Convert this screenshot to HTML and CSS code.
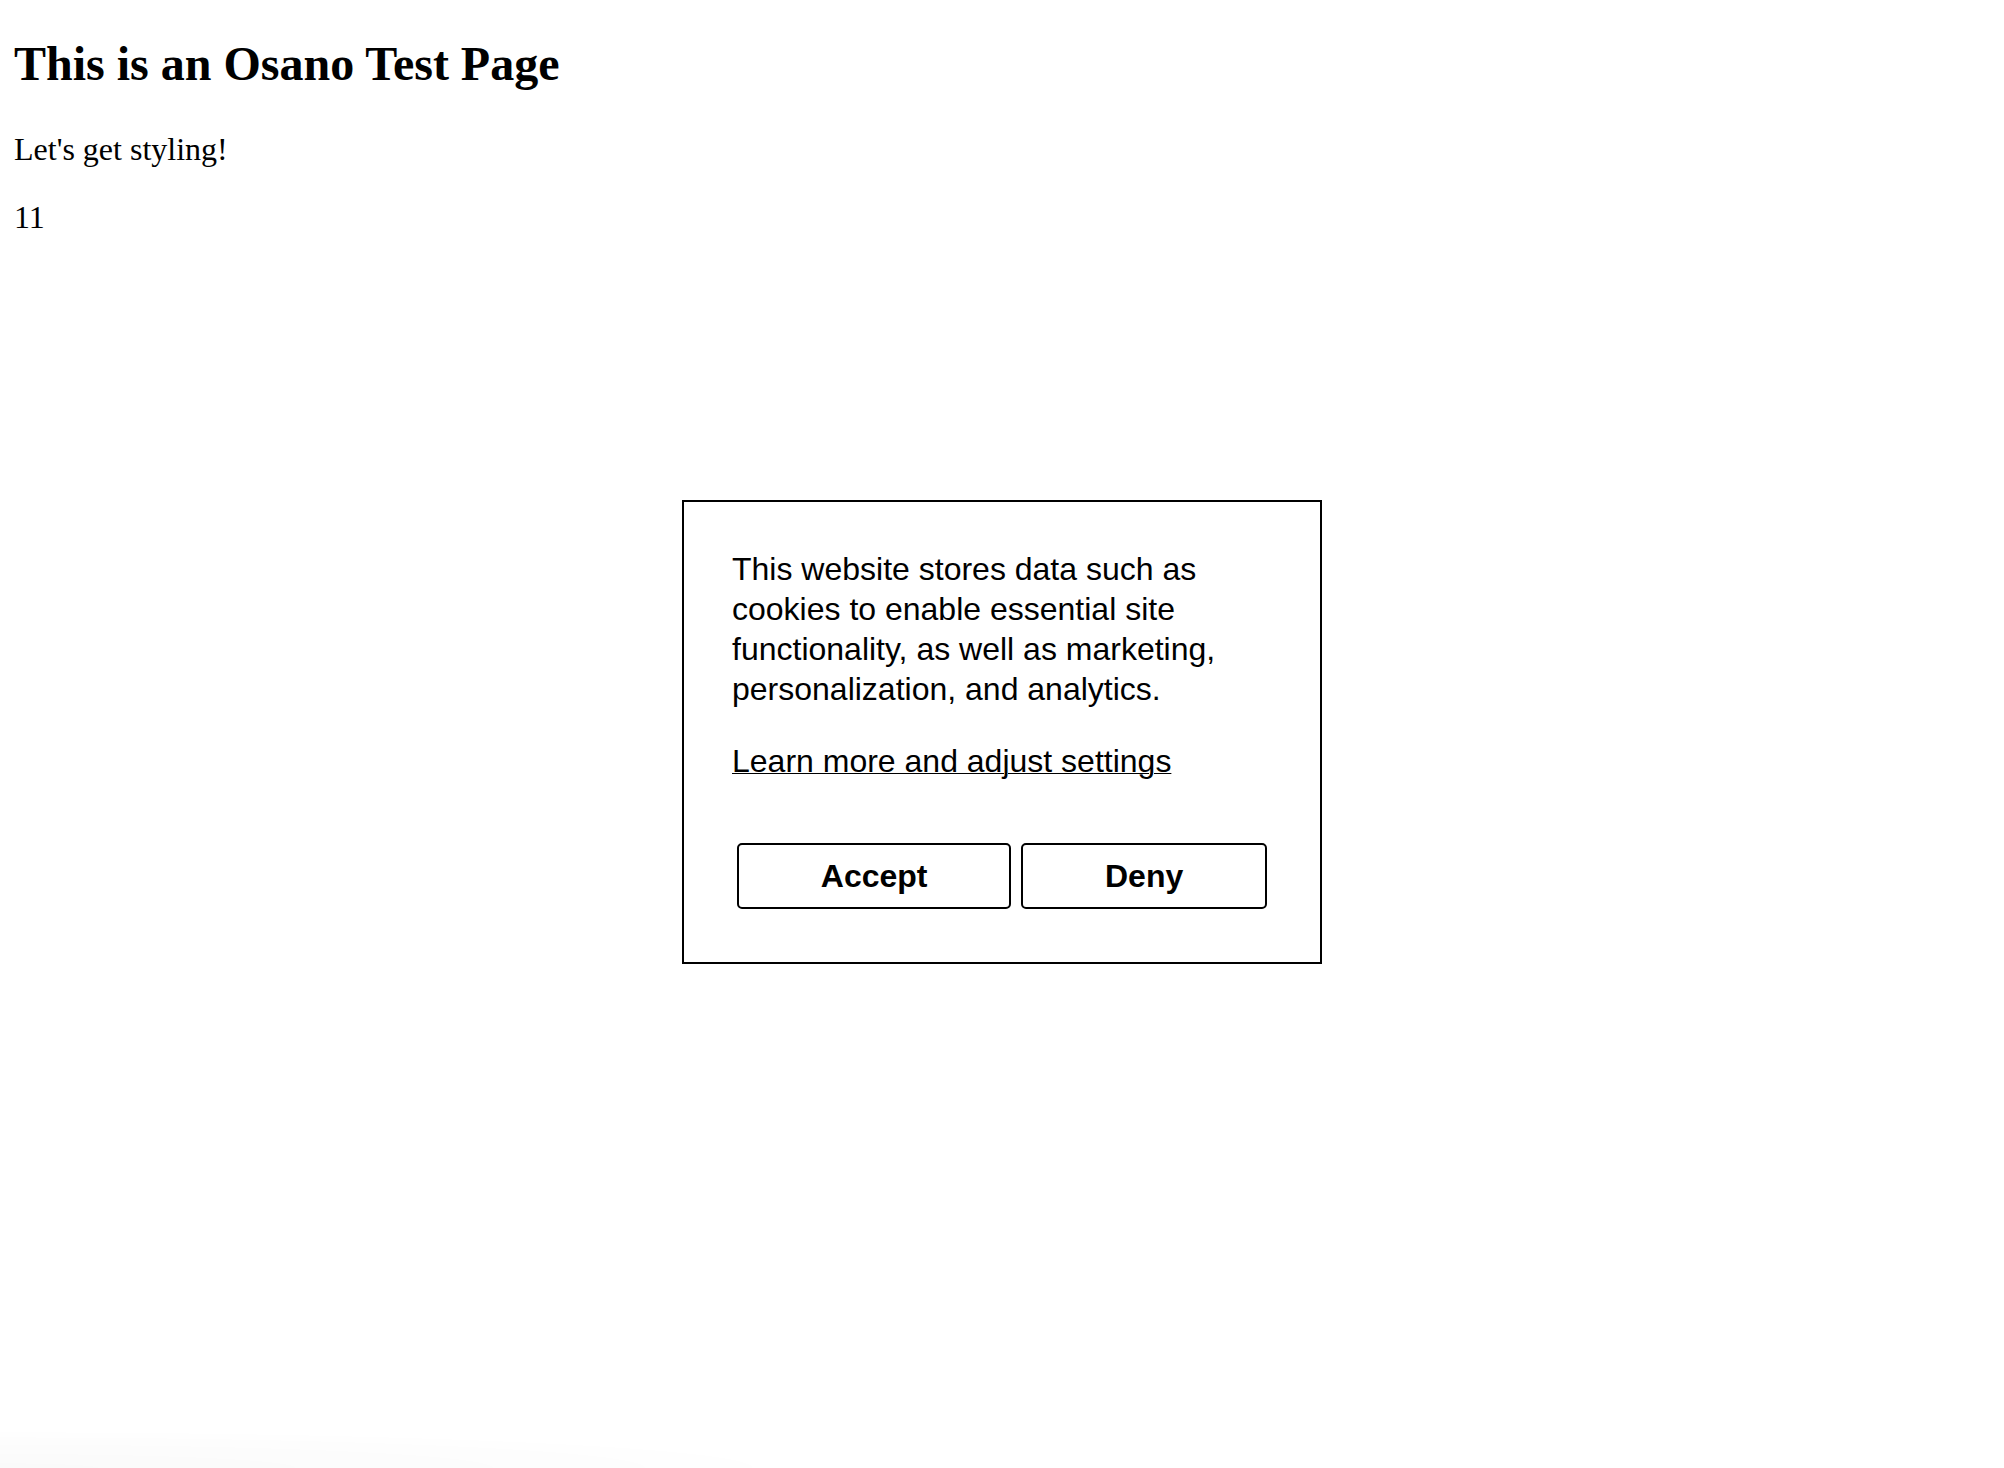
FILE: index.html
```html
<!DOCTYPE html>
<html lang="en">
<head>
<meta charset="utf-8">
<title>Osano Test Page</title>
<link rel="stylesheet" href="styles.css">
</head>
<body>
  <main class="page">
    <h1 class="page-title">This is an Osano Test Page</h1>
    <p class="page-text">Let's get styling!</p>
    <p class="page-text">11</p>
  </main>

  <div class="consent-overlay">
    <div class="consent-dialog" role="dialog" aria-label="Cookie consent">
      <p class="consent-message">This website stores data such as cookies to enable essential site functionality, as well as marketing, personalization, and analytics.</p>
      <a class="consent-link" href="#">Learn more and adjust settings</a>
      <div class="consent-buttons">
        <button class="consent-button" type="button">Accept</button>
        <button class="consent-button" type="button">Deny</button>
      </div>
    </div>
  </div>

  <div class="corner-shade" aria-hidden="true"></div>
</body>
</html>
```

FILE: styles.css
```css
html, body {
  background: #ffffff;
}

body {
  margin: 0 14px;
  color: #000000;
  font-family: "Liberation Serif", "Times New Roman", serif;
}

.page-title {
  font-family: "Liberation Serif", "Times New Roman", serif;
  font-weight: bold;
  font-size: 48px;
  line-height: 55px;
  margin: 36px 0 39.5px;
}

.page-text {
  font-size: 32px;
  line-height: 37px;
  margin: 0 0 31px;
}

.consent-overlay {
  position: fixed;
  inset: 0;
  display: flex;
  align-items: center;
  justify-content: center;
  padding-bottom: 4px;
  box-sizing: border-box;
}

.consent-dialog {
  width: 640px;
  box-sizing: border-box;
  background: #ffffff;
  border: 2px solid #000000;
  padding: 47px 48px 48px;
  display: flex;
  flex-direction: column;
  align-items: flex-start;
  font-family: "Liberation Sans", Arial, Helvetica, sans-serif;
  font-size: 32px;
  line-height: 40px;
  color: #000000;
}

.consent-message {
  margin: 0 0 32px;
}

.consent-link {
  color: #000000;
  text-decoration: underline;
  text-decoration-thickness: 1px;
  text-underline-offset: 1px;
}

.consent-buttons {
  display: flex;
  align-self: stretch;
  margin-top: 57px;
}

.consent-button {
  flex: 1 1 auto;
  margin: 5px;
  height: 66px;
  padding: 0 16px;
  background: #ffffff;
  color: #000000;
  border: 2px solid #000000;
  border-radius: 5px;
  font-family: "Liberation Sans", Arial, Helvetica, sans-serif;
  font-weight: bold;
  font-size: 32px;
  line-height: 38px;
  cursor: pointer;
}

.corner-shade {
  position: fixed;
  left: 0;
  bottom: 0;
  width: 760px;
  height: 36px;
  background: radial-gradient(ellipse at bottom left, rgba(0, 0, 0, 0.018) 0%, rgba(0, 0, 0, 0.008) 55%, rgba(0, 0, 0, 0) 75%);
  pointer-events: none;
}
```
